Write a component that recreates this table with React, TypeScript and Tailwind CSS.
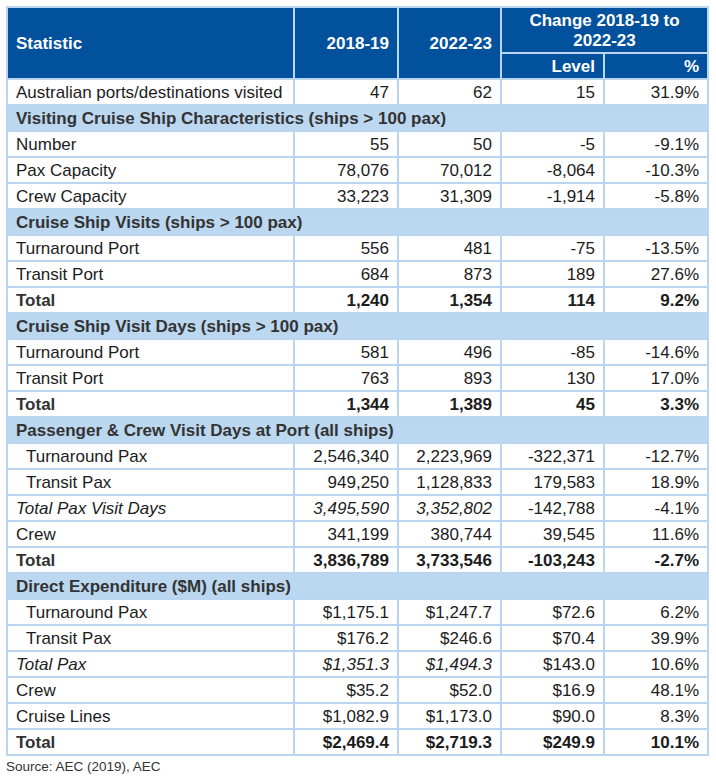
type Row =
  | { kind: "section"; label: string }
  | { kind: "data"; label: string; vals: string[]; bold?: boolean; italic?: boolean; indent?: boolean };

const rows: Row[] = [
  { kind: "data", label: "Australian ports/destinations visited", vals: ["47", "62", "15", "31.9%"] },
  { kind: "section", label: "Visiting Cruise Ship Characteristics (ships > 100 pax)" },
  { kind: "data", label: "Number", vals: ["55", "50", "-5", "-9.1%"] },
  { kind: "data", label: "Pax Capacity", vals: ["78,076", "70,012", "-8,064", "-10.3%"] },
  { kind: "data", label: "Crew Capacity", vals: ["33,223", "31,309", "-1,914", "-5.8%"] },
  { kind: "section", label: "Cruise Ship Visits (ships > 100 pax)" },
  { kind: "data", label: "Turnaround Port", vals: ["556", "481", "-75", "-13.5%"] },
  { kind: "data", label: "Transit Port", vals: ["684", "873", "189", "27.6%"] },
  { kind: "data", label: "Total", vals: ["1,240", "1,354", "114", "9.2%"], bold: true },
  { kind: "section", label: "Cruise Ship Visit Days (ships > 100 pax)" },
  { kind: "data", label: "Turnaround Port", vals: ["581", "496", "-85", "-14.6%"] },
  { kind: "data", label: "Transit Port", vals: ["763", "893", "130", "17.0%"] },
  { kind: "data", label: "Total", vals: ["1,344", "1,389", "45", "3.3%"], bold: true },
  { kind: "section", label: "Passenger & Crew Visit Days at Port (all ships)" },
  { kind: "data", label: "Turnaround Pax", vals: ["2,546,340", "2,223,969", "-322,371", "-12.7%"], indent: true },
  { kind: "data", label: "Transit Pax", vals: ["949,250", "1,128,833", "179,583", "18.9%"], indent: true },
  { kind: "data", label: "Total Pax Visit Days", vals: ["3,495,590", "3,352,802", "-142,788", "-4.1%"], italic: true },
  { kind: "data", label: "Crew", vals: ["341,199", "380,744", "39,545", "11.6%"] },
  { kind: "data", label: "Total", vals: ["3,836,789", "3,733,546", "-103,243", "-2.7%"], bold: true },
  { kind: "section", label: "Direct Expenditure ($M) (all ships)" },
  { kind: "data", label: "Turnaround Pax", vals: ["$1,175.1", "$1,247.7", "$72.6", "6.2%"], indent: true },
  { kind: "data", label: "Transit Pax", vals: ["$176.2", "$246.6", "$70.4", "39.9%"], indent: true },
  { kind: "data", label: "Total Pax", vals: ["$1,351.3", "$1,494.3", "$143.0", "10.6%"], italic: true },
  { kind: "data", label: "Crew", vals: ["$35.2", "$52.0", "$16.9", "48.1%"] },
  { kind: "data", label: "Cruise Lines", vals: ["$1,082.9", "$1,173.0", "$90.0", "8.3%"] },
  { kind: "data", label: "Total", vals: ["$2,469.4", "$2,719.3", "$249.9", "10.1%"], bold: true },
];

const cell = "border-2 border-[#b9d5ef] h-[26px] px-2 py-0 leading-none";

export default function App() {
  return (
    <div className="bg-white w-[716px] h-[781px] pt-[6px] pl-[6px] font-['Liberation_Sans',Arial,sans-serif] text-[17px] text-[#1c1c1c]">
      <table className="border-collapse table-fixed w-[701px]">
        <colgroup>
          <col className="w-[287px]" />
          <col className="w-[104px]" />
          <col className="w-[103px]" />
          <col className="w-[103px]" />
          <col className="w-[104px]" />
        </colgroup>
        <thead>
          <tr className="bg-[#02519c] text-white font-bold">
            <th rowSpan={2} className={`${cell} text-left`}>Statistic</th>
            <th rowSpan={2} className={`${cell} text-right`}>2018-19</th>
            <th rowSpan={2} className={`${cell} text-right`}>2022-23</th>
            <th colSpan={2} className={`${cell} text-center !h-[46px] !leading-[20px] pt-[1px]`}>
              Change 2018-19 to
              <br />
              2022-23
            </th>
          </tr>
          <tr className="bg-[#02519c] text-white font-bold">
            <th className={`${cell} text-right`}>Level</th>
            <th className={`${cell} text-right`}>%</th>
          </tr>
        </thead>
        <tbody>
          {rows.map((r, i) =>
            r.kind === "section" ? (
              <tr key={i} className="bg-[#bcd7f0]">
                <td colSpan={5} className={`${cell} font-bold text-[#333333]`}>
                  {r.label}
                </td>
              </tr>
            ) : (
              <tr key={i} className={r.bold ? "font-bold" : ""}>
                <td className={`${cell} ${r.indent ? "pl-[18px]" : ""} ${r.bold ? "text-[#333333]" : ""} ${r.italic ? "italic" : ""}`}>
                  {r.label}
                </td>
                {r.vals.map((v, j) => (
                  <td key={j} className={`${cell} text-right ${r.italic && j < 2 ? "italic" : ""}`}>
                    {v}
                  </td>
                ))}
              </tr>
            )
          )}
        </tbody>
      </table>
      <div className="text-[13.5px] text-[#333333] mt-[1px]">Source: AEC (2019), AEC</div>
    </div>
  );
}
